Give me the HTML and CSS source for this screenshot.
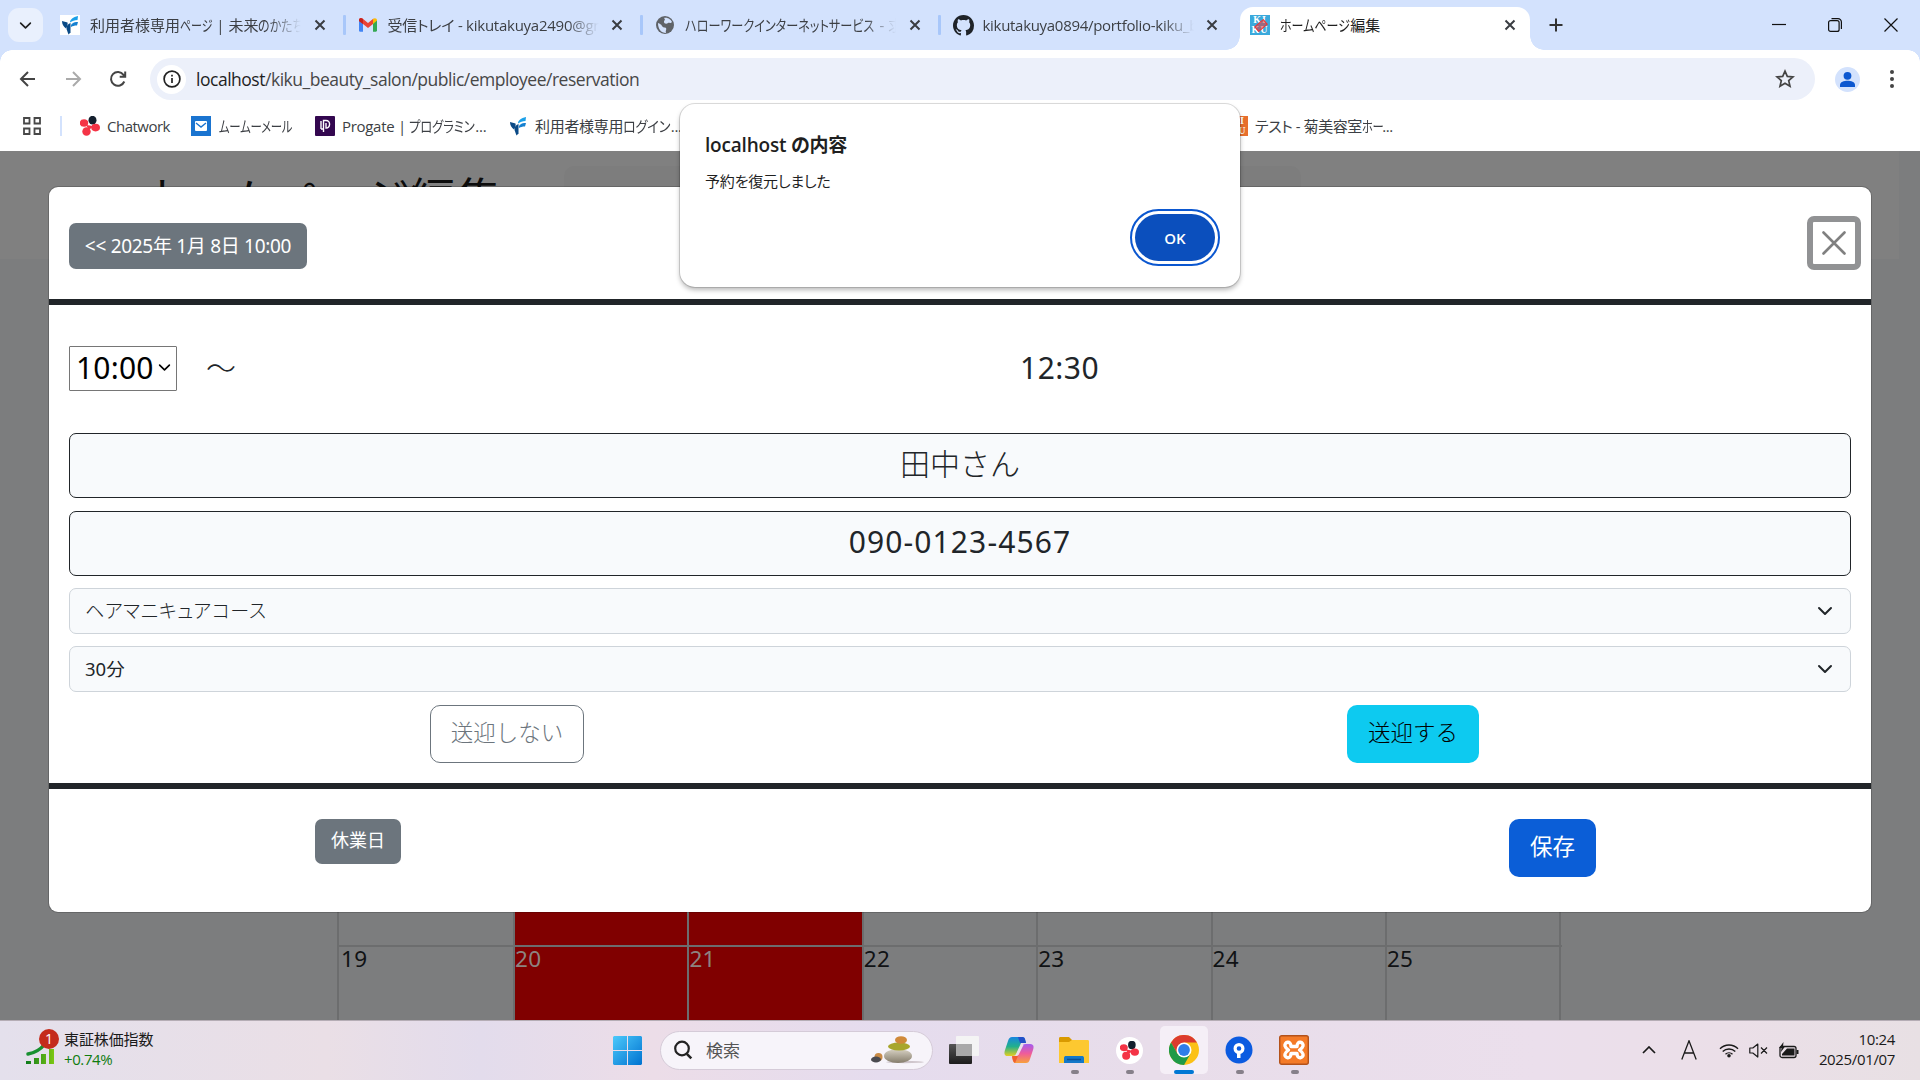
FILE: index.html
```html
<!DOCTYPE html>
<html lang="ja">
<head>
<meta charset="utf-8">
<title>ホームページ編集</title>
<link rel="stylesheet" href="styles.css">
</head>
<body>
<svg class="defs" width="0" height="0">
  <defs>
    <symbol id="x" viewBox="0 0 12 12"><path d="M1.500 1.500l9 9M10.500 1.500l-9 9" stroke="currentColor" stroke-width="2" fill="none"/></symbol>
    <symbol id="chev" viewBox="0 0 16 16"><path d="M2 5l6 6 6-6" fill="none" stroke="currentColor" stroke-width="2" stroke-linecap="round" stroke-linejoin="round"/></symbol>
    <symbol id="mirai" viewBox="0 0 20 20"><path d="M2 6l5.500 1.500c.5 2-.5 4.500-1.500 6C3.500 12 2 9 2 6z" fill="#0a4a86"/><path d="M10 7.500C10 4.500 13 2 18 1l-.5 4c-3 .3-5 1-7.500 2.500z" fill="#1ba0e8"/><path d="M11 12c-.5-3 2-5 7-5l-1 3.500c-3 0-4 .5-6 1.500z" fill="#1580d0"/><path d="M6.500 14c0-3 1-5 4-6v9.500l-2 2z" fill="#0a4a86"/></symbol>
    <symbol id="flower" viewBox="0 0 20 20"><ellipse cx="12.500" cy="4.200" rx="4" ry="4.400" fill="#14202e"/><ellipse cx="4" cy="7" rx="4.200" ry="3.700" fill="#f43446"/><ellipse cx="15.600" cy="11.600" rx="4.400" ry="3.800" fill="#f43446"/><ellipse cx="6.500" cy="15.500" rx="4.200" ry="4.300" fill="#f43446"/><path d="M6 9l4 .5 3 1-4 3.500z" fill="#f43446"/></symbol>
  </defs>
</svg>

<header class="chrome">
  <div class="tabstrip">
    <button class="tab-search"><svg width="13" height="13"><use href="#chev"/></svg></button>
    <div class="tab">
      <span class="fav white"><svg width="20" height="20"><use href="#mirai"/></svg></span>
      <span class="tab-title fade t1">利用者様専用<span class="kana k-page">ページ</span> | 未来<span class="kana k-form">のかたち</span></span>
      <svg class="close" width="12" height="12"><use href="#x"/></svg>
    </div>
    <div class="tab sep">
      <span class="fav"><svg width="20" height="20" viewBox="0 0 20 20"><path d="M1 5v10.500c0 .8.500 1.200 1.200 1.200H5V7z" fill="#4285f4"/><path d="M15 7v9.700h2.800c.7 0 1.200-.5 1.200-1.200V5z" fill="#34a853"/><path d="M1 5c0-2 2-2.500 3.500-1.500L10 8l5.500-4.500L15 9l-5 4-5-4-4-3z" fill="#ea4335"/><path d="M15 4c2-1.500 4-.5 4 1.500L15 9z" fill="#fbbc04"/><path d="M1 5c0-2 2.500-2.500 4-1v5L1 6z" fill="#c5221f"/></svg></span>
      <span class="tab-title fade t2">受信トレイ - kikutakuya2490@gn</span>
      <svg class="close" width="12" height="12"><use href="#x"/></svg>
    </div>
    <div class="tab sep">
      <span class="fav"><svg width="20" height="20" viewBox="0 0 20 20"><circle cx="10" cy="10" r="9" fill="#5f6368"/><path d="M3 8c2 1 3 1 4 3s3 1 4 2-1 3 0 5c-5 0-8-4-8-10zM9 3c4-1 7 2 8 4-2 2-3 0-4 1s-4 1-4-1 2-2 0-4z" fill="#d3e2fd"/></svg></span>
      <span class="tab-title fade t3"><span class="kana k-hello">ハローワークインターネットサービス</span> - 求</span>
      <svg class="close" width="12" height="12"><use href="#x"/></svg>
    </div>
    <div class="tab sep">
      <span class="fav"><svg width="21" height="21" viewBox="0 0 16 16"><path fill="#1f2328" d="M8 0C3.580 0 0 3.580 0 8c0 3.540 2.290 6.530 5.470 7.590.4.070.55-.17.55-.38 0-.19-.01-.82-.01-1.490-2.010.37-2.530-.49-2.690-.94-.09-.23-.48-.94-.82-1.130-.28-.15-.68-.52-.01-.53.63-.01 1.080.58 1.230.82.72 1.210 1.870.87 2.330.66.07-.52.28-.87.51-1.070-1.780-.2-3.640-.89-3.640-3.950 0-.87.310-1.590.82-2.150-.08-.2-.36-1.020.08-2.120 0 0 .67-.21 2.200.82.640-.18 1.320-.27 2-.27s1.360.09 2 .27c1.530-1.040 2.200-.82 2.200-.82.440 1.100.160 1.920.08 2.120.510.56.820 1.270.820 2.150 0 3.070-1.870 3.750-3.650 3.950.290.250.540.730.540 1.480 0 1.070-.01 1.930-.01 2.200 0 .21.150.46.550.38A8.010 8.010 0 0 0 16 8c0-4.420-3.580-8-8-8z"/></svg></span>
      <span class="tab-title fade t4">kikutakuya0894/portfolio-kiku_b</span>
      <svg class="close" width="12" height="12"><use href="#x"/></svg>
    </div>
    <div class="tab active">
      <span class="fav kiku"><b>KI</b><b>KU</b></span>
      <span class="tab-title t5"><span class="kana k-home">ホームページ</span>編集</span>
      <svg class="close" width="12" height="12"><use href="#x"/></svg>
    </div>
    <svg class="newtab" width="14" height="14" viewBox="0 0 14 14"><path d="M7 .5v13M.5 7h13" stroke="#333" stroke-width="2"/></svg>
    <div class="wincontrols">
      <svg width="14" height="14" viewBox="0 0 14 14"><path d="M0 6.500h14" stroke="#111" stroke-width="1.200"/></svg>
      <svg width="14" height="14" viewBox="0 0 14 14"><rect x=".6" y="2.600" width="10.500" height="10.800" rx="2" fill="none" stroke="#111" stroke-width="1.200"/><path d="M3.500.6H10A3.400 3.400 0 0 1 13.400 4v7" fill="none" stroke="#111" stroke-width="1.200"/></svg>
      <svg width="14" height="14" viewBox="0 0 14 14"><path d="M.5.5l13 13M13.500.5l-13 13" stroke="#111" stroke-width="1.200"/></svg>
    </div>
  </div>
  <div class="toolbar">
    <svg class="nav-i" width="20" height="20" viewBox="0 0 20 20"><path d="M17 10H3.500M10 3l-7 7 7 7" fill="none" stroke="#444" stroke-width="2"/></svg>
    <svg class="nav-i" width="20" height="20" viewBox="0 0 20 20"><path d="M3 10h13.500M10 3l7 7-7 7" fill="none" stroke="#aaa" stroke-width="2"/></svg>
    <svg class="nav-i" width="20" height="20" viewBox="0 0 20 20"><path d="M16.300 12.500A6.900 6.900 0 1 1 15.500 5.800L17 7.500M17.200 2.500v5.300h-5.500" fill="none" stroke="#444" stroke-width="2"/></svg>
    <div class="omnibox">
      <span class="info"><svg width="18" height="18" viewBox="0 0 18 18"><circle cx="9" cy="9" r="7.900" fill="none" stroke="#222" stroke-width="1.700"/><path d="M9 8v5M9 4.800v1.800" stroke="#222" stroke-width="1.700"/></svg></span>
      <span class="url"><b>localhost</b>/kiku_beauty_salon/public/employee/reservation</span>
      <svg class="star" width="20" height="20" viewBox="0 0 20 20"><path d="M10 2.200l2.300 5.200 5.700.5-4.300 3.700 1.300 5.600-5-3-5 3 1.300-5.600L2 7.900l5.700-.5z" fill="none" stroke="#444" stroke-width="1.700"/></svg>
    </div>
    <span class="profile"><svg width="25" height="25" viewBox="0 0 25 25"><circle cx="12.500" cy="8.800" r="3.900" fill="#0b57d0"/><path d="M5 20v-2c0-3 4-4.300 7.500-4.300S20 15 20 18v2z" fill="#0b57d0"/></svg></span>
    <svg class="dots" width="6" height="20" viewBox="0 0 6 20"><circle cx="3" cy="3" r="2" fill="#444"/><circle cx="3" cy="10" r="2" fill="#444"/><circle cx="3" cy="17" r="2" fill="#444"/></svg>
  </div>
  <div class="bookmarks">
    <svg class="apps" width="18" height="18" viewBox="0 0 18 18"><path d="M1 1h5.500v5.500H1zM11.500 1H17v5.500h-5.500zM1 11.500h5.500V17H1zM11.500 11.500H17V17h-5.500z" fill="none" stroke="#474747" stroke-width="1.800"/></svg>
    <i class="bm-sep"></i>
    <span class="bm b1"><svg width="20" height="20"><use href="#flower"/></svg><span>Chatwork</span></span>
    <span class="bm b2"><svg width="20" height="20" viewBox="0 0 20 20"><rect width="20" height="20" fill="#1a74d0"/><rect x="4" y="5" width="12" height="10" rx="1" fill="#fff"/><path d="M5 7l5 4 5-4" fill="none" stroke="#1a74d0" stroke-width="1.400"/></svg><span class="kana k-mail">ムームーメール</span></span>
    <span class="bm b3"><svg width="20" height="20" viewBox="0 0 20 20"><rect width="20" height="20" rx="1" fill="#33074f"/><path d="M6 5v8M8.500 16V4.500h2.500c5 0 4.500 7.500 0 7.500v-5M6 13h2.500" fill="none" stroke="#fff" stroke-width="1.400"/></svg><span>Progate | <span class="kana k-prog">プログラミン</span>...</span></span>
    <span class="bm b4"><svg width="20" height="20"><use href="#mirai"/></svg><span>利用者様専用<span class="kana k-login">ログイン</span>...</span></span>
    <span class="bm b5"><span class="fav kiku orange"><b>KI</b><b>KU</b></span><span>テスト - 菊美容室<span class="kana k-ho">ホー</span>...</span></span>
  </div>
</header>

<main class="page">
  <div class="page-head">
    <h1>ホームページ編集</h1>
    <div class="page-nav"></div>
  </div>
  <div class="calendar">
    <div class="week prev"><div></div><div class="off"></div><div class="off"></div><div></div><div></div><div></div><div></div></div>
    <div class="week"><div class="first">19</div><div class="off">20</div><div class="off">21</div><div>22</div><div>23</div><div>24</div><div>25</div></div>
  </div>

  <section class="modal">
    <div class="modal-head">
      <button class="btn gray back">&lt;&lt; 2025年 1月 8日 10:00</button>
      <button class="modal-close"><svg width="24" height="24" viewBox="0 0 24 24"><path d="M1.500 1.500l21 21M22.500 1.500l-21 21" stroke="#808080" stroke-width="2.600" stroke-linecap="round"/></svg></button>
    </div>
    <div class="modal-body">
      <div class="time-row">
        <div class="time-select"><span>10:00</span><svg width="13" height="13"><use href="#chev"/></svg></div>
        <span class="tilde">～</span>
        <span class="end">12:30</span>
      </div>
      <div class="field name">田中さん</div>
      <div class="field phone">090-0123-4567</div>
      <div class="select course"><span>ヘアマニキュアコース</span><svg width="16" height="16"><use href="#chev"/></svg></div>
      <div class="select mins"><span>30分</span><svg width="16" height="16"><use href="#chev"/></svg></div>
      <div class="pickup">
        <div><button class="btn lg outline">送迎しない</button></div>
        <div><button class="btn lg cyan">送迎する</button></div>
      </div>
    </div>
    <div class="modal-foot">
      <button class="btn gray holiday">休業日</button>
      <button class="btn lg blue">保存</button>
    </div>
  </section>
</main>

<section class="alert">
  <h2>localhost の内容</h2>
  <p>予約を復元しました</p>
  <button class="ok">OK</button>
</section>

<footer class="taskbar">
  <div class="widget">
    <div class="stocks">
      <svg width="30" height="36" viewBox="0 0 30 36"><defs><linearGradient id="gr"><stop stop-color="#0c7a1c"/><stop offset="1" stop-color="#7cc713"/></linearGradient></defs><path d="M2 25c7-1 12-4 17-10" fill="none" stroke="#189030" stroke-width="3.500" stroke-linecap="round"/><path d="M0 32h5v3H0zM8 29h5v6H8zM15 25h5v10h-5zM23 20h5v15h-5z" fill="url(#gr)"/></svg>
      <b>1</b>
    </div>
    <div class="widget-text"><span>東証株価指数</span><span class="up">+0.74%</span></div>
  </div>
  <svg class="win" width="29" height="29" viewBox="0 0 29 29"><defs><linearGradient id="wg" x2="1" y2="1"><stop stop-color="#4cc9fb"/><stop offset="1" stop-color="#0072d0"/></linearGradient></defs><path d="M1 0h13v14H0V1zM15 0h13l1 1v13H15zM0 15h14v14H1l-1-1zM15 15h14v13l-1 1H15z" fill="url(#wg)"/></svg>
  <div class="search">
    <svg width="20" height="20" viewBox="0 0 20 20"><circle cx="9" cy="8.500" r="6.800" fill="none" stroke="#222" stroke-width="2.200"/><path d="M13.800 13.800l4.500 4.500" stroke="#222" stroke-width="2.600"/></svg>
    <span>検索</span>
    <svg class="stones" width="54" height="28" viewBox="0 0 54 28"><defs><linearGradient id="st" x2="0" y2="1"><stop stop-color="#d8d2c4"/><stop offset="1" stop-color="#857d6c"/></linearGradient></defs><ellipse cx="34" cy="26" rx="19" ry="1.200" fill="#cfc6cc"/><ellipse cx="27" cy="20" rx="14" ry="7" fill="url(#st)"/><ellipse cx="28" cy="10.500" rx="11" ry="4" fill="#a8a62c"/><ellipse cx="30" cy="4" rx="6" ry="3.800" fill="#d08a3a"/><ellipse cx="7.500" cy="21" rx="4" ry="4" fill="#c98a45"/><ellipse cx="5" cy="23.500" rx="5" ry="3" fill="#4a4a50"/></svg>
  </div>
  <div class="apps-row">
    <div class="app"><svg width="30" height="30" viewBox="0 0 30 30"><defs><linearGradient id="tv" x2="0" y2="1"><stop stop-color="#555"/><stop offset="1" stop-color="#1c1c1c"/></linearGradient></defs><rect x="0" y="9" width="23" height="20" rx="1" fill="url(#tv)"/><rect x="7" y="1" width="23" height="20" rx="1" fill="#f4f4f4"/><path d="M7 9h16v12H7z" fill="#a9a9a9"/></svg></div>
    <div class="app"><svg width="30" height="28" viewBox="0 0 30 28"><defs><linearGradient id="c1" x2="0" y2="1"><stop stop-color="#1886e0"/><stop offset=".5" stop-color="#22b08c"/><stop offset="1" stop-color="#e5cf20"/></linearGradient><linearGradient id="c2" x2="0" y2="1"><stop stop-color="#a35cf0"/><stop offset=".5" stop-color="#ef5c9a"/><stop offset="1" stop-color="#f8a13c"/></linearGradient></defs><path d="M8 1h10c3 0 3 2 4 6h-5l-4 9c-1 3-2 4-5 4H4c-4 0-4-3-3-6l3-9c1-3 2-4 4-4z" fill="url(#c1)"/><path d="M14 1h4c3 0 3 2 4 6h-6z" fill="#2350c8"/><path d="M22 27H12c-3 0-3-2-4-6h5l4-9c1-3 2-4 5-4h4c4 0 4 3 3 6l-3 9c-1 3-2 4-4 4z" fill="url(#c2)"/><path d="M8 20h6l-3 7c-2-1-2-3-3-7z" fill="#f0602e"/><path d="M17 9h2.500l-5 10H11.500z" fill="#ecdfeb"/></svg></div>
    <div class="app run"><svg width="30" height="28" viewBox="0 0 30 28"><path d="M0 2.500C0 1.500.5 1 1.500 1H10l3 3v4H0z" fill="#d99a00"/><path d="M0 6h10l3-2h15.500c1 0 1.500.5 1.500 1.500V27H0z" fill="#fdc830"/><path d="M5 27v-5c0-1.500 1-2 2-2h16c1 0 2 .5 2 2v5z" fill="#1478c8"/><path d="M8 23.500h14" stroke="#0b4f94" stroke-width="1.500"/></svg></div>
    <div class="app run"><span class="cw"><svg width="19" height="19"><use href="#flower"/></svg></span></div>
    <div class="app run current"><svg width="30" height="30" viewBox="0 0 30 30"><circle cx="15" cy="15" r="15" fill="#fbc116"/><path d="M2 7.500A15 15 0 0 1 28 7.500H15L8.500 18.700z" fill="#dc3b2e"/><path d="M2 7.500a15 15 0 0 0 13 22.500l6.500-11.200L15 20l-6.500-1.300z" fill="#1f9a48"/><circle cx="15" cy="15" r="7.500" fill="#fff"/><circle cx="15" cy="15" r="5.900" fill="#2f7de8"/></svg></div>
    <div class="app run"><svg width="28" height="28" viewBox="0 0 28 28"><circle cx="14" cy="14" r="13.500" fill="#0b5be0"/><circle cx="14" cy="12.500" r="3.900" fill="none" stroke="#fff" stroke-width="3.200"/><path d="M12 15.500v6.500h3.500v-6.500z" fill="#fff"/></svg></div>
    <div class="app run"><svg width="30" height="30" viewBox="0 0 30 30"><rect x=".7" y=".7" width="28.600" height="28.600" rx="2" fill="#f47b28" stroke="#b4521a" stroke-width="1.400"/><path d="M12 11.500C12 5 5 7 6 11c.3 1.500 1.500 2.500 3.500 4C7.500 16.500 6.300 17.500 6 19c-1 4 6 6 6-.5h6c0 6.500 7 4.500 6 .5-.3-1.500-1.500-2.500-3.500-4 2-1.500 3.200-2.500 3.500-4 1-4-6-6-6 .5z" fill="none" stroke="#fff" stroke-width="3.400" stroke-linejoin="round"/></svg></div>
  </div>
  <div class="tray">
    <span class="w40"><svg width="14" height="8" viewBox="0 0 14 8"><path d="M1 7l6-6 6 6" fill="none" stroke="#1a1a1a" stroke-width="1.700"/></svg></span>
    <span class="w40 ime"><svg width="16" height="20" viewBox="0 0 16 20"><path d="M.8 19.500L8 .8l7.200 18.700M3.500 13h9" fill="none" stroke="#1a1a1a" stroke-width="1.300"/></svg></span>
    <span class="w30"><svg width="20" height="15" viewBox="0 0 20 15"><path d="M1 5.800a12.500 12.500 0 0 1 18 0M3.700 8.600a9 9 0 0 1 12.600 0M6.500 11.300a5 5 0 0 1 7 0" fill="none" stroke="#1a1a1a" stroke-width="1.400"/><circle cx="10" cy="12.800" r="1.800" fill="#1a1a1a"/></svg></span>
    <span class="w30"><svg width="20" height="15" viewBox="0 0 20 15"><path d="M.8 5v5h3l5 4V1l-5 4zM12 4.500l6 6M18 4.500l-6 6" fill="none" stroke="#1a1a1a" stroke-width="1.200" stroke-linejoin="round"/></svg></span>
    <span class="w30"><svg width="20" height="17" viewBox="0 0 20 17"><rect x="1" y="4.500" width="16" height="11" rx="2" fill="none" stroke="#1a1a1a" stroke-width="1.300"/><path d="M3 13.500V12l5-5.500h7.500v7zM17.500 8h2v4h-2zM4.500 0L0 6h2.500L2 10l4-5.500H4z" fill="#1a1a1a"/></svg></span>
    <div class="clock"><span>10:24</span><span>2025/01/07</span></div>
  </div>
</footer>
</body>
</html>
```

FILE: styles.css
```css
* { box-sizing: border-box; }
body {
  margin: 0;
  width: 1920px;
  height: 1080px;
  overflow: hidden;
  position: relative;
  display: flex;
  flex-direction: column;
  background: #fff;
  font-family: "Open Sans", "Noto Sans CJK JP", sans-serif;
  font-size: 15px;
  color: #3c3f44;
  white-space: nowrap;
}
svg { display: block; flex: none; }
.defs { position: absolute; }
button { font: inherit; margin: 0; padding: 0; border: 0; white-space: nowrap; }

/* browser frame */
.chrome { height: 151px; flex: none; background: #fff; font-feature-settings: "palt"; }
.tabstrip { height: 50px; display: flex; align-items: center; background: #d3e2fd; }
.tab-search { width: 35px; height: 34px; margin: 0 4px 0 8px; border-radius: 11px; background: #e9f0fd; display: flex; align-items: center; justify-content: center; color: #1f1f1f; }
.tab { width: 297.5px; height: 50px; flex: none; padding: 0 19px 0 13px; display: flex; align-items: center; position: relative; }
.tab.sep::before { content: ""; position: absolute; left: -2px; top: 15px; width: 3px; height: 20px; border-radius: 1px; background: #a8c7fa; }
.fav { width: 20px; height: 20px; flex: none; }
.fav.white { background: #fff; }
.tab-title { width: 211px; margin-left: 10px; overflow: hidden; line-height: 30px; }
.fade { -webkit-mask-image: linear-gradient(90deg, #000 85%, transparent 100%); mask-image: linear-gradient(90deg, #000 85%, transparent 100%); }

/* half-width style kana, as in the system interface font */
.kana { display: inline-block; transform-origin: 0 50%; transform: scaleX(.8); }
.k-page { transform: scaleX(.73); margin-right: -12px; }
.k-form { margin-right: -12px; }
.k-hello { transform: scaleX(.81); margin-right: -43px; }
.k-home { margin-right: -17px; }
.k-mail { transform: scaleX(.76); margin-right: -23px; }
.k-prog { transform: scaleX(.83); margin-right: -13px; }
.k-login { transform: scaleX(.88); margin-right: -6px; }
.k-ho { transform: scaleX(.75); margin-right: -8px; }
.t2 { letter-spacing: -.25px; }
.t4 { letter-spacing: -.3px; }

.close { margin-left: auto; color: #3a3d42; }
.tab.active { width: 290px; height: 43px; align-self: flex-end; margin-left: 3px; padding: 0 14px 7px 10px; border-radius: 13px 13px 0 0; background: #fff; color: #1f1f1f; }
.tab.active::before, .tab.active::after { content: ""; position: absolute; bottom: 0; width: 14px; height: 14px; }
.tab.active::before { left: -14px; background: radial-gradient(circle at 0 0, transparent 13.500px, #fff 14px); }
.tab.active::after { right: -14px; background: radial-gradient(circle at 100% 0, transparent 13.500px, #fff 14px); }
.kiku { display: flex; flex-direction: column; background: #3aa9dc; color: #fff; font: 700 10px/10px "Liberation Serif", serif; text-align: center; letter-spacing: 1px; position: relative; }
.kiku b { height: 10px; }
.kiku::after { content: ""; position: absolute; left: 5px; top: 7px; width: 10px; height: 5px; border: 1px solid #e33; background: #e338; transform: rotate(-40deg); }
.kiku.orange { background: #e86f2c; }
.kiku.orange::after { display: none; }
.newtab { margin-left: 19px; }
.wincontrols { margin-left: auto; padding-right: 22px; display: flex; gap: 42px; }
.toolbar { height: 50px; display: flex; align-items: center; padding: 8px 25px 0 18px; position: relative; }
.toolbar::before, .toolbar::after { content: ""; position: absolute; top: 0; width: 12px; height: 12px; }
.toolbar::before { left: 0; background: radial-gradient(circle at 100% 100%, transparent 11.500px, #d3e2fd 12px); }
.toolbar::after { right: 0; background: radial-gradient(circle at 0 100%, transparent 11.500px, #d3e2fd 12px); }
.nav-i { margin-right: 25px; }
.omnibox { width: 1665px; height: 42px; margin-left: -3px; border-radius: 21px; background: #ecf0fa; display: flex; align-items: center; padding: 0 20px 0 7px; }
.info { width: 29px; height: 29px; border-radius: 50%; background: #fff; display: flex; align-items: center; justify-content: center; }
.url { margin-left: 10px; font-size: 17.500px; letter-spacing: -.48px; color: #474747; }
.url b { font-weight: 400; color: #1f1f1f; }
.star { margin-left: auto; }
.profile { width: 25px; height: 25px; margin-left: 20px; border-radius: 50%; background: #d3e2fd; }
.dots { margin-left: auto; }
.bookmarks { height: 51px; display: flex; align-items: center; padding-left: 23px; }
.bm-sep { width: 2px; height: 20px; margin: 0 18px 0 19px; background: #d3e2fd; }
.bm { display: flex; align-items: center; gap: 7px; height: 26px; letter-spacing: -.3px; }
.b1 { width: 111px; letter-spacing: -.5px; }
.b2 { width: 124px; gap: 8px; }
.b3 { width: 193px; }
.b4 { width: 720px; }
.b5 { letter-spacing: -.45px; }

/* dimmed page */
.page { height: 869px; flex: none; position: relative; background: #7c7d7e; display: flex; flex-direction: column; overflow: hidden; color: #101214; font-family: "Noto Sans", "Noto Sans CJK JP", sans-serif; }
.page-head { width: 1899px; height: 108px; flex: none; background: #808080; display: flex; }
.page-head h1 { width: 425px; margin: 15px 0 0 139px; font-size: 45px; line-height: 66px; letter-spacing: .6px; font-weight: 400; color: #0c0c0c; }
.page-nav { width: 737px; margin-top: 15px; border-radius: 10px; background: #7d7d7d; }
.calendar { width: 1225px; flex: none; margin: 652px 0 0 337px; border: solid #6c6d6e; border-width: 0 0 0 2px; }
.week { display: grid; grid-template-columns: 176px repeat(6, 174.4px); height: 74px; font-size: 22.500px; line-height: 24px; letter-spacing: .3px; }
.week.prev { height: 36px; border-bottom: 2px solid #6c6d6e; }
.week > div { border-right: 2px solid #6c6d6e; }
.week .first { padding-left: 2px; }
.off { background: #800000; color: #8d8480; }

/* reservation modal */
.modal { position: absolute; left: 49px; top: 36px; width: 1822px; height: 725px; border-radius: 9px; background: #fff; box-shadow: 0 0 0 1px rgba(0,0,0,.18); color: #212529; font-size: 20px; }
.modal-head { height: 118px; padding: 0 10px 0 20px; border-bottom: 6px solid #212529; display: flex; align-items: center; justify-content: space-between; }
.btn { border-radius: 7px; font-size: 20px; line-height: 30px; }
.gray { background: #6c757d; color: #fff; }
.back { width: 238px; height: 46px; margin-top: 6px; font-size: 19px; letter-spacing: -.3px; padding-bottom: 1px; }
.modal-close { width: 54px; height: 54px; border: 6px solid #919294; border-radius: 7px; background: #fff; display: flex; align-items: center; justify-content: center; }
.modal-body { height: 484px; padding: 41px 20px 20px; border-bottom: 6px solid #212529; }
.time-row { height: 45px; margin-bottom: 42px; padding-bottom: 2px; display: flex; align-items: center; font-size: 30px; line-height: 40px; letter-spacing: .7px; }
.time-select { width: 108px; height: 45px; position: relative; top: 1px; border: 1px solid #767676; border-radius: 1px; padding: 0 5px 2px 6px; display: flex; align-items: center; justify-content: space-between; color: #000; letter-spacing: .2px; }
.tilde { margin-left: 29px; width: 32px; font-weight: 300; }
.end { margin-left: 782px; letter-spacing: .5px; }
.field { height: 65px; margin-bottom: 13px; border: 1px solid #212529; border-radius: 7px; background: #f8fafc; text-align: center; font-size: 30px; line-height: 60px; }
.name { font-weight: 300; line-height: 59px; }
.phone { letter-spacing: 1.1px; margin-bottom: 12px; line-height: 59px; }
.select { height: 46px; margin-bottom: 12px; padding: 0 17px 0 15px; border: 1px solid #ced4da; border-radius: 7px; background: #f8fafc; display: flex; align-items: center; justify-content: space-between; color: #212529; }
.select span { line-height: 30px; font-size: 18.500px; }
.course span { font-feature-settings: "palt"; font-weight: 300; font-size: 19px; letter-spacing: .6px; }
.pickup { margin: 13px -15px 0; display: grid; grid-template-columns: 1fr 1fr; justify-items: center; }
.lg { height: 58px; border-radius: 10px; font-size: 22.500px; font-weight: 300; padding-bottom: 3px; }
.outline { width: 154px; border: 1px solid #6c757d; background: #fff; color: #6c757d; }
.cyan { width: 132px; background: #0dcaf0; color: #000; }
.modal-foot { height: 123px; padding: 30px 275px 0 266px; display: flex; justify-content: space-between; align-items: flex-start; }
.holiday { width: 86px; height: 45px; font-size: 18px; padding-bottom: 3px; }
.blue { width: 87px; background: #0b5ed7; color: #fff; font-weight: 400; }

/* browser alert */
.alert { position: absolute; left: 680px; top: 104px; width: 560px; height: 183px; padding: 26px 20px 0 25px; border-radius: 15px; background: #fff; box-shadow: 0 0 0 1px rgba(0,0,0,.13), 0 3px 5px rgba(0,0,0,.28); font-feature-settings: "palt"; color: #1f1f1f; }
.alert h2 { margin: 0; font-size: 19px; line-height: 30px; font-weight: 600; letter-spacing: -.2px; }
.alert p { margin: 7px 0 0; font-size: 15px; line-height: 28px; letter-spacing: -.2px; }
.ok { display: block; width: 80px; height: 47px; margin: 19px 5px 0 auto; border-radius: 24px; background: #0b4fbd; color: #fff; font-weight: 600; font-size: 15px; outline: 2px solid #0b57d0; outline-offset: 3px; }

/* taskbar */
.taskbar { height: 60px; flex: none; display: flex; align-items: center; box-shadow: inset 0 1px #b5adb5; background: linear-gradient(90deg, #e4e0ec 0, #eadfe6 17%, #e3dcec 25%, #ecdde8 34%, #e5dcee 46%, #e8ddea 60%, #ebdfec 80%, #ebdfe8 90%, #e8e0e4 100%); color: #1a1a1a; }
.widget { width: 613px; padding-left: 26px; display: flex; align-items: center; }
.stocks { position: relative; width: 39px; height: 36px; margin-top: -6px; }
.stocks b { position: absolute; left: 13px; top: 0; width: 20px; height: 20px; border-radius: 50%; background: #c42b1c; color: #fff; font: 400 14px/20px "Open Sans", sans-serif; text-align: center; }
.widget-text { display: flex; flex-direction: column; line-height: 20px; letter-spacing: -.1px; margin: -3px 0 0 -1px; }
.widget-text .up { color: #107c10; letter-spacing: -.4px; }
.search { width: 273px; height: 39px; margin: 0 3.500px 0 18px; padding: 0 7px 0 12px; border-radius: 20px; border: 1px solid #d5cbd8; background: #f7f4fa; display: flex; align-items: center; color: #555; font-size: 17px; }
.search span { margin: -2px 0 0 13px; }
.stones { margin-left: auto; }
.apps-row { display: flex; height: 60px; align-items: center; }
.app { width: 55px; height: 48px; display: flex; align-items: center; justify-content: center; position: relative; }
.run::after { content: ""; position: absolute; bottom: 0; left: 24px; width: 8px; height: 4px; border-radius: 2px; background: #86808a; }
.current { width: 48px; margin: 0 3.500px; border-radius: 5px; background: #f5eff7; }
.current::after { width: 20px; left: 14px; background: #0078d4; }
.cw { width: 27px; height: 27px; border-radius: 50%; background: #fff; display: flex; align-items: center; justify-content: center; }
.tray { margin-left: auto; padding-right: 25px; display: flex; align-items: center; }
.tray > span { display: flex; justify-content: center; }
.w40 { width: 40px; }
.ime { margin-right: 5px; }
.w30 { width: 30px; }
.clock { width: 91px; display: flex; flex-direction: column; align-items: flex-end; line-height: 20px; letter-spacing: -.35px; margin-top: -3px; }
```
